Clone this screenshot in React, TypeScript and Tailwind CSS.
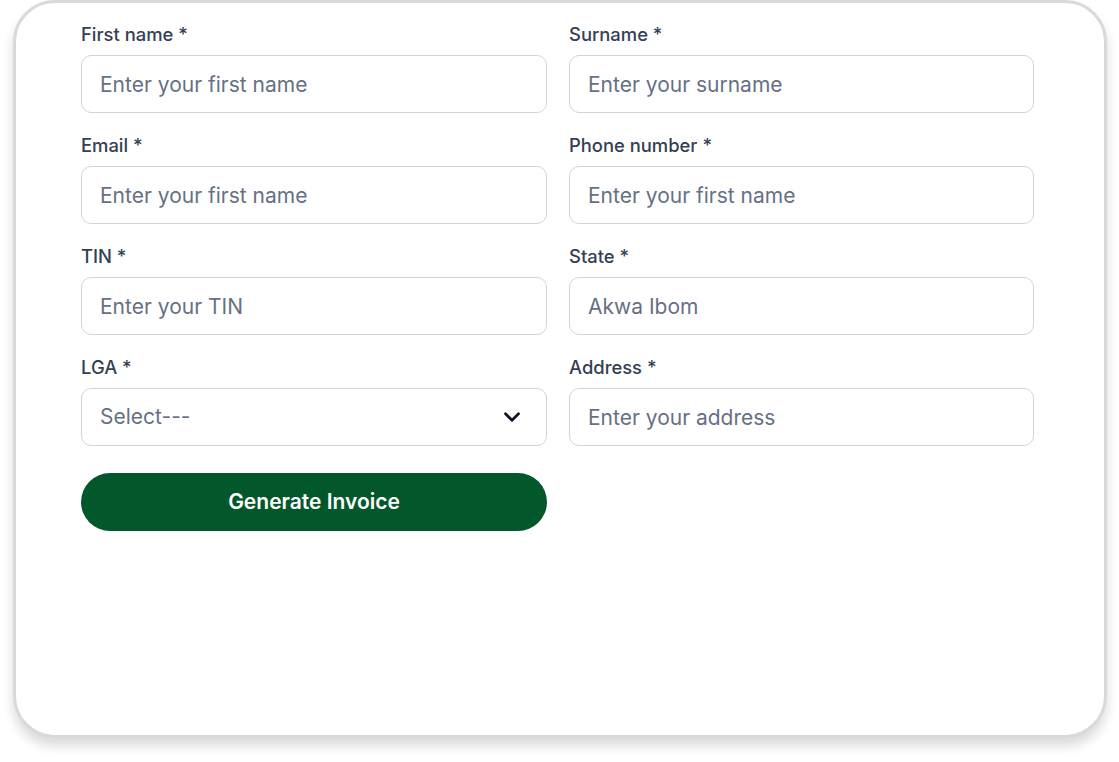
import { ChevronDown } from 'lucide-react';

interface Field {
  label: string;
  placeholder: string;
  select?: boolean;
}

const fields: Field[] = [
  { label: 'First name *', placeholder: 'Enter your first name' },
  { label: 'Surname *', placeholder: 'Enter your surname' },
  { label: 'Email *', placeholder: 'Enter your first name' },
  { label: 'Phone number *', placeholder: 'Enter your first name' },
  { label: 'TIN *', placeholder: 'Enter your TIN' },
  { label: 'State *', placeholder: 'Akwa Ibom' },
  { label: 'LGA *', placeholder: 'Select---', select: true },
  { label: 'Address *', placeholder: 'Enter your address' },
];

function FormField({ field }: { field: Field }) {
  return (
    <div className="flex flex-col">
      <label className="text-[18.4px] leading-6 font-medium text-[#344054] mb-[9px]">{field.label}</label>
      {field.select ? (
        <div className="h-[58px] rounded-[10px] border border-[#d0d5dd] bg-white flex items-center justify-between pl-[18px] pr-[21px]">
          <span className="text-[21px] text-[#667085]">{field.placeholder}</span>
          <ChevronDown size={26} strokeWidth={2.6} className="text-[#101828]" />
        </div>
      ) : (
        <input
          placeholder={field.placeholder}
          className="h-[58px] rounded-[10px] border border-[#d0d5dd] bg-white px-[18px] text-[21px] text-[#101828] placeholder:text-[#667085] outline-none"
        />
      )}
    </div>
  );
}

export default function App() {
  return (
    <div className="w-[1119px] h-[762px] bg-white overflow-hidden" style={{ fontFamily: 'Inter, "Noto Sans", sans-serif' }}>
      <div className="ml-[13px] w-[1094px] h-[738px] rounded-[42px] border-[3px] border-[#d9d9d9] bg-white shadow-[0_8px_12px_rgba(0,0,0,0.15)] pt-[19px] pl-[65px]">
        <div className="grid grid-cols-[466px_465px] gap-x-[22px] gap-y-[20px]">
          {fields.map((f) => (
            <FormField key={f.label} field={f} />
          ))}
        </div>
        <button className="mt-[27px] w-[466px] h-[58px] rounded-full bg-[#02582a] text-white text-[21px] font-semibold">
          Generate Invoice
        </button>
      </div>
    </div>
  );
}
